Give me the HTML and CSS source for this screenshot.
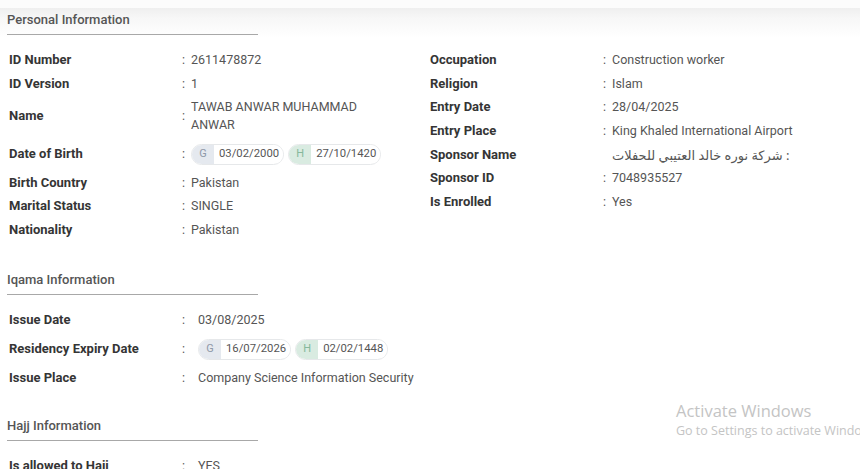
FILE: index.html
```html
<!DOCTYPE html>
<html>
<head>
<meta charset="utf-8">
<link rel="stylesheet" href="styles.css">
</head>
<body>
<div class="topstrip"></div>
<main class="page">
  <section class="section">
    <h2 class="section-title">Personal Information</h2>
    <div class="columns">
      <div class="grid">
        <div class="label">ID Number</div><div class="colon">:</div><div class="value">2611478872</div>
        <div class="label">ID Version</div><div class="colon">:</div><div class="value">1</div>
        <div class="label">Name</div><div class="colon">:</div><div class="value wrap">TAWAB ANWAR MUHAMMAD ANWAR</div>
        <div class="label">Date of Birth</div><div class="colon">:</div>
        <div class="value pills">
          <span class="pill"><span class="tag g">G</span><span class="date">03/02/2000</span></span>
          <span class="pill"><span class="tag h">H</span><span class="date">27/10/1420</span></span>
        </div>
        <div class="label">Birth Country</div><div class="colon">:</div><div class="value">Pakistan</div>
        <div class="label">Marital Status</div><div class="colon">:</div><div class="value">SINGLE</div>
        <div class="label">Nationality</div><div class="colon">:</div><div class="value">Pakistan</div>
      </div>
      <div class="grid">
        <div class="label">Occupation</div><div class="colon">:</div><div class="value">Construction worker</div>
        <div class="label">Religion</div><div class="colon">:</div><div class="value">Islam</div>
        <div class="label">Entry Date</div><div class="colon">:</div><div class="value">28/04/2025</div>
        <div class="label">Entry Place</div><div class="colon">:</div><div class="value">King Khaled International Airport</div>
        <div class="label">Sponsor Name</div><div class="colon"></div><div class="value arabic" dir="rtl">: شركة نوره خالد العتيبي للحفلات</div>
        <div class="label">Sponsor ID</div><div class="colon">:</div><div class="value">7048935527</div>
        <div class="label">Is Enrolled</div><div class="colon">:</div><div class="value">Yes</div>
      </div>
    </div>
  </section>

  <section class="section section-tight">
    <h2 class="section-title">Iqama Information</h2>
    <div class="grid wide">
      <div class="label">Issue Date</div><div class="colon">:</div><div class="value">03/08/2025</div>
      <div class="label">Residency Expiry Date</div><div class="colon">:</div>
      <div class="value pills">
        <span class="pill"><span class="tag g">G</span><span class="date">16/07/2026</span></span>
        <span class="pill"><span class="tag h">H</span><span class="date">02/02/1448</span></span>
      </div>
      <div class="label">Issue Place</div><div class="colon">:</div><div class="value">Company Science Information Security</div>
    </div>
  </section>

  <section class="section">
    <h2 class="section-title">Hajj Information</h2>
    <div class="grid wide">
      <div class="label">Is allowed to Hajj</div><div class="colon">:</div><div class="value">YES</div>
    </div>
  </section>
</main>
<div class="watermark">
  <div class="wm-title">Activate Windows</div>
  <div class="wm-sub">Go to Settings to activate Windows.</div>
</div>
</body>
</html>
```

FILE: styles.css
```css
html, body {
  margin: 0;
  padding: 0;
  background: #ffffff;
  overflow: hidden;
}
body {
  font-family: Roboto, "Noto Sans", Arial, sans-serif;
  color: #333;
  width: 860px;
  height: 469px;
  position: relative;
}
.topstrip {
  height: 8px;
  background: #fcfcfc;
}
.page {
  background: linear-gradient(to bottom, #efefef 0px, #f7f7f7 10px, #ffffff 30px);
  padding: 4px 0 0 7px;
}
.section {
  margin-bottom: 33px;
}
.section-tight {
  margin-bottom: 31px;
}
.section-title {
  margin: 0;
  width: 251px;
  font-size: 13px;
  line-height: 16px;
  font-weight: 500;
  color: #555;
  padding-bottom: 6px;
  border-bottom: 1.5px solid #a8a8a8;
}
.columns {
  display: grid;
  grid-template-columns: 421px 421px;
  align-items: start;
  margin-top: 16px;
}
.grid {
  display: grid;
  grid-template-columns: 173px 9px 1fr;
  row-gap: 5.7px;
  align-items: center;
  align-content: start;
  padding-left: 2px;
}
.section > .grid {
  margin-top: 16px;
}
.grid.wide {
  grid-template-columns: 173px 16px 1fr;
  row-gap: 6px;
}
.label {
  font-size: 13px;
  font-weight: 700;
  color: #353535;
  line-height: 18px;
}
.colon {
  font-size: 12.5px;
  color: #555;
  line-height: 18px;
}
.value {
  font-size: 12.5px;
  color: #555;
  line-height: 18px;
}
.value.wrap {
  width: 178px;
}
.value.arabic {
  font-family: "Noto Sans", "DejaVu Sans", sans-serif;
  font-size: 13px;
  justify-self: start;
}
.pills {
  display: flex;
  gap: 4px;
  height: 28px;
  align-items: center;
}
.pill {
  display: inline-flex;
  align-items: center;
  height: 19px;
  border: 1px solid #e6e8ea;
  border-radius: 11px;
  overflow: hidden;
  font-size: 11.3px;
  color: #555;
}
.tag {
  display: inline-flex;
  align-items: center;
  justify-content: center;
  width: 22px;
  height: 100%;
  font-size: 11px;
}
.tag.g {
  background: #e5e9ef;
  color: #8f99a8;
}
.tag.h {
  background: #d9ebe1;
  color: #86b89c;
}
.date {
  padding: 0 4px 0 5px;
  background: #fff;
}
.watermark {
  position: absolute;
  left: 676px;
  top: 400px;
  white-space: nowrap;
  color: #c4c4c4;
  font-family: "Open Sans", "Noto Sans", sans-serif;
}
.wm-title {
  font-size: 16.5px;
  line-height: 22px;
}
.wm-sub {
  font-size: 12.5px;
  line-height: 17px;
}
```
